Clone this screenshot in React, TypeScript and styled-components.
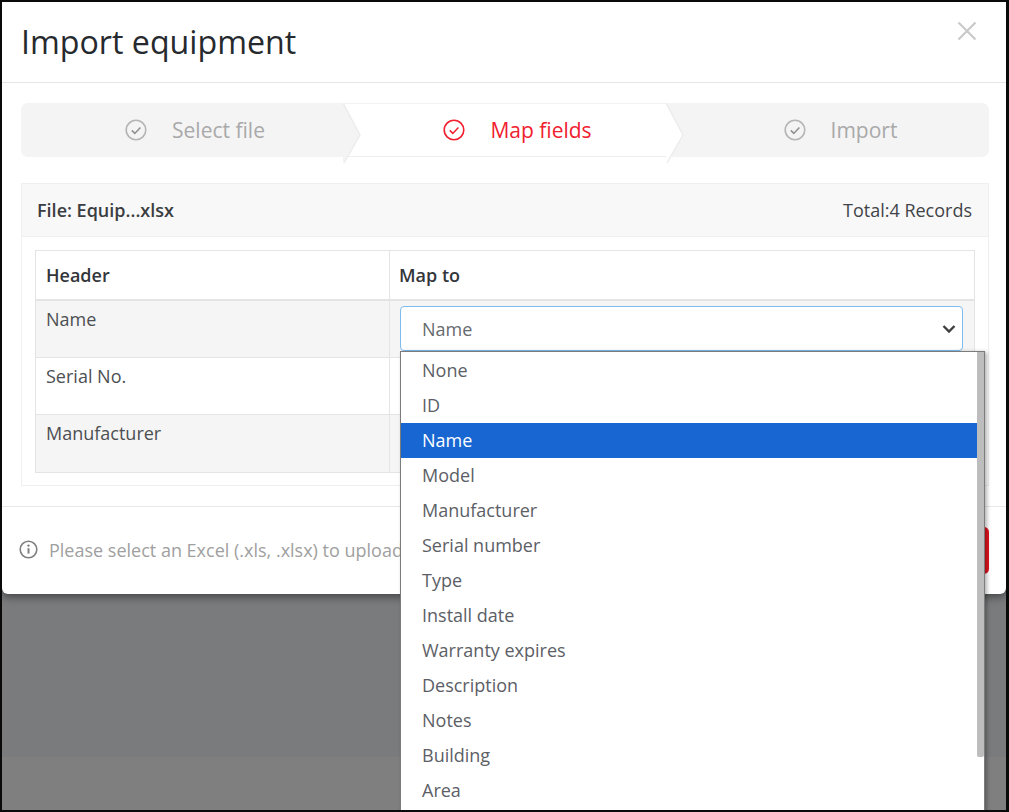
import React from "react";
import styled, { createGlobalStyle } from "styled-components";

const Global = createGlobalStyle`
  html, body { margin: 0; padding: 0; }
  body { font-family: "Open Sans", "Liberation Sans", sans-serif; }
  * { box-sizing: border-box; }
`;

const Frame = styled.div`
  position: relative;
  width: 1009px;
  height: 812px;
  overflow: hidden;
  border: solid #0a0a0a;
  border-width: 2px 3px 2px 2px;
  background: #7a7b7c;
  display: flex;
  flex-direction: column;
`;

const Modal = styled.div`
  height: 592px;
  flex: none;
  background: #fff;
  border-radius: 0 0 6px 6px;
  box-shadow: 0 3px 8px rgba(0, 0, 0, 0.45);
  display: flex;
  flex-direction: column;
  position: relative;
  z-index: 1;
`;

const BackdropGap = styled.div`
  height: 163px;
  flex: none;
`;

const BackdropBand = styled.div`
  flex: 1;
  background: #7f7f7f;
`;

const Header = styled.div`
  height: 81px;
  flex: none;
  border-bottom: 1px solid #e6e6e6;
  padding: 0 28px 0 19px;
  display: flex;
  justify-content: space-between;
  align-items: flex-start;
`;

const Title = styled.h1`
  margin: 17px 0 0;
  font-size: 32.2px;
  line-height: 46px;
  font-weight: 400;
  color: #262a2e;
`;

const Close = styled.div`
  margin-top: 18px;
  color: #c9c9c9;
  display: flex;
`;

const Body = styled.div`
  height: 423px;
  flex: none;
  padding: 20px 17px 0 19px;
  display: flex;
  flex-direction: column;
`;

const Steps = styled.div`
  height: 54px;
  flex: none;
  display: grid;
  grid-template-columns: 322px 323px 1fr;
  background: #f4f4f4;
  border-radius: 7px;
`;

const Step = styled.div<{ $active?: boolean }>`
  position: relative;
  display: flex;
  align-items: center;
  justify-content: center;
  gap: 25px;
  padding-left: 26px;
  font-size: 21px;
  color: ${(p) => (p.$active ? "#f0202f" : "#a9a9a9")};
  background: ${(p) => (p.$active ? "#fff" : "transparent")};
  border-bottom: 1px solid ${(p) => (p.$active ? "#eeeeee" : "transparent")};
  border-top: 1px solid ${(p) => (p.$active ? "#f2f2f2" : "transparent")};
`;

const StepLabel = styled.span`
  line-height: 1;
`;

const Arrow = styled.svg`
  position: absolute;
  left: 100%;
  top: -1px;
  z-index: 2;
`;

const Panel = styled.div`
  margin-top: 26px;
  height: 303px;
  flex: none;
  border: 1px solid #efefef;
  display: flex;
  flex-direction: column;
`;

const PanelHead = styled.div`
  height: 53px;
  flex: none;
  background: #f8f8f8;
  border-bottom: 1px solid #efefef;
  padding: 0 16px 0 15px;
  display: flex;
  align-items: center;
  justify-content: space-between;
  font-size: 18px;
  color: #404448;
`;

const FileName = styled.span`
  font-weight: 600;
  color: #3a3d41;
`;

const PanelBody = styled.div`
  padding: 13px 13px 0;
`;

const Table = styled.table`
  width: 940px;
  border-collapse: collapse;
  table-layout: fixed;
  font-size: 18px;
  color: #4c4f52;
`;

const HeadCol = styled.col`
  width: 354px;
`;

const HeadCell = styled.th`
  height: 49px;
  padding: 0 10px;
  text-align: left;
  font-weight: 600;
  color: #33363a;
  border: 1px solid #e4e4e4;
  border-bottom-width: 2px;
  &:last-child {
    padding-left: 9px;
  }
`;

const Cell = styled.td<{ $gray?: boolean }>`
  height: ${(p) => (p.$gray ? "58px" : "57px")};
  padding: 5px 11px 5px 10px;
  vertical-align: top;
  border: 1px solid #e4e4e4;
  background: ${(p) => (p.$gray ? "#f5f5f5" : "#fff")};
  line-height: 26px;
`;

const Select = styled.div<{ $focus?: boolean }>`
  height: 45px;
  background: #fff;
  border: 1px solid ${(p) => (p.$focus ? "#7cbcf0" : "#dcdcdc")};
  border-radius: 4px;
  padding: 1px 6px 0 21px;
  display: flex;
  align-items: center;
  justify-content: space-between;
  color: #666a6e;
`;

const Footer = styled.div`
  flex: 1;
  border-top: 1px solid #e8e8e8;
  padding: 0 17px 0 17px;
  display: flex;
  align-items: center;
  justify-content: space-between;
`;

const Hint = styled.div`
  display: flex;
  align-items: center;
  gap: 11px;
  font-size: 18px;
  color: #a0a0a0;
  margin-top: -2px;
`;

const HintIcon = styled.svg`
  flex: none;
  color: #808080;
`;

const RedButton = styled.div`
  width: 100px;
  height: 47px;
  border-radius: 5px;
  background: #e0141f;
`;

const Menu = styled.div`
  position: absolute;
  left: 398px;
  top: 349px;
  width: 585px;
  height: 470px;
  background: #fff;
  border: 1px solid #7c7c7c;
  box-shadow: 2px 1px 4px rgba(0, 0, 0, 0.3);
  z-index: 3;
  padding-top: 1px;
  padding-right: 7px;
`;

const Option = styled.div<{ $selected?: boolean }>`
  height: 35px;
  padding: 0 0 2px 21px;
  display: flex;
  align-items: center;
  font-size: 18px;
  color: ${(p) => (p.$selected ? "#fff" : "#5c6066")};
  background: ${(p) => (p.$selected ? "#1766d2" : "transparent")};
`;

const Thumb = styled.div`
  position: absolute;
  right: 0;
  top: 0;
  width: 7px;
  height: 405px;
  background: #bdbdbd;
  border-radius: 0 0 2px 2px;
`;

const CheckIcon = ({ color }: { color: string }) => (
  <svg width="22" height="22" viewBox="0 0 22 22" fill="none">
    <circle cx="11" cy="11" r="9.8" stroke={color} strokeWidth="1.6" />
    <path d="M6.8 11.4l3 3 5.6-6" stroke={color === "#f0202f" ? color : "#8f8f8f"} strokeWidth="1.5" />
  </svg>
);

const ArrowShape = ({ fill }: { fill: string }) => (
  <Arrow width="20" height="62" viewBox="0 0 20 62" fill="none">
    <path d="M0 0L17 32L0 60Z" fill={fill} />
    <path d="M0 0L17 32L1 60" stroke="#ececec" strokeWidth="1.5" />
  </Arrow>
);

const options = [
  "None", "ID", "Name", "Model", "Manufacturer", "Serial number", "Type",
  "Install date", "Warranty expires", "Description", "Notes", "Building", "Area",
];

const rows = ["Name", "Serial No.", "Manufacturer"];

export default function App() {
  return (
    <Frame>
      <Global />
      <Modal>
        <Header>
          <Title>Import equipment</Title>
          <Close>
            <svg width="22" height="22" viewBox="0 0 22 22" fill="none" stroke="currentColor" strokeWidth="2.2">
              <path d="M2.5 2.5L19.5 19.5M19.5 2.5L2.5 19.5" />
            </svg>
          </Close>
        </Header>
        <Body>
          <Steps>
            <Step>
              <CheckIcon color="#b5b5b5" />
              <StepLabel>Select file</StepLabel>
              <ArrowShape fill="#f4f4f4" />
            </Step>
            <Step $active>
              <CheckIcon color="#f0202f" />
              <StepLabel>Map fields</StepLabel>
              <ArrowShape fill="#ffffff" />
            </Step>
            <Step>
              <CheckIcon color="#b5b5b5" />
              <StepLabel>Import</StepLabel>
            </Step>
          </Steps>
          <Panel>
            <PanelHead>
              <FileName>File: Equip...xlsx</FileName>
              <span>Total:4 Records</span>
            </PanelHead>
            <PanelBody>
              <Table>
                <colgroup>
                  <HeadCol />
                  <col />
                </colgroup>
                <thead>
                  <tr>
                    <HeadCell>Header</HeadCell>
                    <HeadCell>Map to</HeadCell>
                  </tr>
                </thead>
                <tbody>
                  {rows.map((r, i) => (
                    <tr key={r}>
                      <Cell $gray={i % 2 === 0}>{r}</Cell>
                      <Cell $gray={i % 2 === 0}>
                        <Select $focus={i === 0}>
                          {i === 0 ? r : ""}
                          <svg width="14" height="10" viewBox="0 0 14 10" fill="none" stroke="#3f3f3f" strokeWidth="2.4">
                            <path d="M1.5 2l5.5 5.5L12.5 2" />
                          </svg>
                        </Select>
                      </Cell>
                    </tr>
                  ))}
                </tbody>
              </Table>
            </PanelBody>
          </Panel>
        </Body>
        <Footer>
          <Hint>
            <HintIcon width="19" height="19" viewBox="0 0 19 19" fill="none">
              <circle cx="9.5" cy="9.5" r="8.3" stroke="currentColor" strokeWidth="1.6" />
              <path d="M9.5 8.2v5.4" stroke="currentColor" strokeWidth="2" />
              <circle cx="9.5" cy="5.6" r="1.2" fill="currentColor" />
            </HintIcon>
            Please select an Excel (.xls, .xlsx) to upload
          </Hint>
          <RedButton />
        </Footer>
      </Modal>
      <BackdropGap />
      <BackdropBand />
      <Menu>
        {options.map((o) => (
          <Option key={o} $selected={o === "Name"}>{o}</Option>
        ))}
        <Thumb />
      </Menu>
    </Frame>
  );
}
